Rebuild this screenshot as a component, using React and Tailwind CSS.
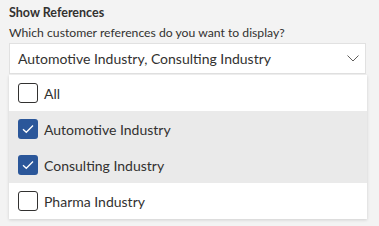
const options = [
  { label: "All", checked: false },
  { label: "Automotive Industry", checked: true },
  { label: "Consulting Industry", checked: true },
  { label: "Pharma Industry", checked: false },
];

const Box = ({ checked }) =>
  checked ? (
    <span className="flex h-[20px] w-[20px] items-center justify-center rounded-[3px] bg-[#2b579a]">
      <svg width="12" height="10" viewBox="0 0 12 10" fill="none">
        <path d="M1 5.2 L4.3 8.3 L11 1.5" stroke="white" strokeWidth="1.3" />
      </svg>
    </span>
  ) : (
    <span className="h-[20px] w-[20px] rounded-[3px] border border-[#323130] bg-white" />
  );

export default function App() {
  return (
    <div
      className="h-[226px] w-[379px] bg-[#f3f3f3] px-[9px] pt-[3px] text-[#323130]"
      style={{ fontFamily: 'Lato, sans-serif' }}
    >
      <div className="text-[12.5px] font-bold leading-[20px]">Show References</div>
      <div className="text-[12.2px] leading-[20px]">Which customer references do you want to display?</div>
      <div className="flex h-[31px] w-[357px] items-center justify-between border border-[#e1e1e1] bg-white pl-[8px] pr-[6px]">
        <span className="text-[14px]">Automotive Industry, Consulting Industry</span>
        <svg width="12" height="7" viewBox="0 0 12 7" fill="none">
          <path d="M0.5 0.5 L6 6 L11.5 0.5" stroke="#605e5c" strokeWidth="1" />
        </svg>
      </div>
      <div className="mt-[1px] w-[358px] bg-white shadow-[0_1px_3px_rgba(0,0,0,0.15)]">
        {options.map((o) => (
          <div
            key={o.label}
            className={`flex h-[36px] items-center gap-[6px] pl-[9px] ${o.checked ? "bg-[#eaeaea]" : ""}`}
          >
            <Box checked={o.checked} />
            <span className="text-[14px]">{o.label}</span>
          </div>
        ))}
      </div>
    </div>
  );
}
